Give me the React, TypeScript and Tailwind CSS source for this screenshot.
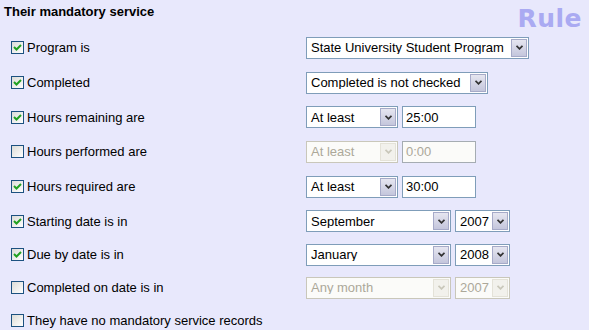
import clsx from "clsx";

type Ctl =
  | { kind: "select"; value: string; w: string; disabled?: boolean }
  | { kind: "input"; value: string; w: string; disabled?: boolean };

const rows: { label: string; checked: boolean; h: string; controls: Ctl[] }[] = [
  {
    label: "Program is",
    checked: true,
    h: "h-[35px]",
    controls: [{ kind: "select", value: "State University Student Program", w: "w-[223px]" }],
  },
  {
    label: "Completed",
    checked: true,
    h: "h-[35px]",
    controls: [{ kind: "select", value: "Completed is not checked", w: "w-[182px]" }],
  },
  {
    label: "Hours remaining are",
    checked: true,
    h: "h-[34px]",
    controls: [
      { kind: "select", value: "At least", w: "w-[92px]" },
      { kind: "input", value: "25:00", w: "w-[74px]" },
    ],
  },
  {
    label: "Hours performed are",
    checked: false,
    h: "h-[35px]",
    controls: [
      { kind: "select", value: "At least", w: "w-[92px]", disabled: true },
      { kind: "input", value: "0:00", w: "w-[74px]", disabled: true },
    ],
  },
  {
    label: "Hours required are",
    checked: true,
    h: "h-[35px]",
    controls: [
      { kind: "select", value: "At least", w: "w-[92px]" },
      { kind: "input", value: "30:00", w: "w-[74px]" },
    ],
  },
  {
    label: "Starting date is in",
    checked: true,
    h: "h-[34px]",
    controls: [
      { kind: "select", value: "September", w: "w-[145px]" },
      { kind: "select", value: "2007", w: "w-[55px]" },
    ],
  },
  {
    label: "Due by date is in",
    checked: true,
    h: "h-[33px]",
    controls: [
      { kind: "select", value: "January", w: "w-[145px]" },
      { kind: "select", value: "2008", w: "w-[55px]" },
    ],
  },
  {
    label: "Completed on date is in",
    checked: false,
    h: "h-[33px]",
    controls: [
      { kind: "select", value: "Any month", w: "w-[145px]", disabled: true },
      { kind: "select", value: "2007", w: "w-[55px]", disabled: true },
    ],
  },
  { label: "They have no mandatory service records", checked: false, h: "h-[33px]", controls: [] },
];

function Checkbox({ checked }: { checked: boolean }) {
  return (
    <span className="flex h-[13px] w-[13px] shrink-0 items-center justify-center border border-[#1c5180] bg-gradient-to-br from-[#dcdcd7] to-white">
      {checked && (
        <svg width="11" height="11" viewBox="0 0 11 11">
          <path d="M2 5 L4.5 7.5 L9 3" fill="none" stroke="#21a121" strokeWidth="2" />
        </svg>
      )}
    </span>
  );
}

function Select({ value, w, disabled }: { value: string; w: string; disabled?: boolean }) {
  return (
    <div
      className={clsx(
        "flex h-[22px] items-center border",
        w,
        disabled ? "border-[#c9c7ba] bg-[#fbfbf9] text-[#aca899]" : "border-[#7f9db9] bg-white text-black"
      )}
    >
      <span className="min-w-0 flex-1 truncate pl-[4px] text-[13px] leading-none">{value}</span>
      <span
        className={clsx(
          "m-px flex h-[18px] w-[16px] shrink-0 items-center justify-center border",
          disabled ? "border-[#e4e2d8] bg-[#f2f1ec]" : "border-[#a6aac8] bg-gradient-to-b from-[#e6e6f0] to-[#c4c6dc]"
        )}
      >
        <svg width="7" height="5" viewBox="0 0 7 5">
          <path d="M0.5 0.8 L3.5 3.8 L6.5 0.8" fill="none" stroke={disabled ? "#c9c7ba" : "#333"} strokeWidth="1.8" />
        </svg>
      </span>
    </div>
  );
}

function Input({ value, w, disabled }: { value: string; w: string; disabled?: boolean }) {
  return (
    <div
      className={clsx(
        "flex h-[22px] items-center border pl-[3px] text-[13px] leading-none",
        w,
        disabled ? "border-[#a5acb2] bg-[#fbfbf9] text-[#aca899]" : "border-[#7f9db9] bg-white text-black"
      )}
    >
      {value}
    </div>
  );
}

export default function App() {
  return (
    <div
      className="h-[330px] w-[589px] overflow-hidden bg-[#e8e8fc] text-black"
      style={{ fontFamily: '"Liberation Sans", Arial, sans-serif' }}
    >
      <div className="flex h-[30px] items-start justify-between">
        <div className="pl-[4px] pt-[4px] text-[13px] font-bold leading-[16px]">Their mandatory service</div>
        <div
          className="mr-[7px] mt-[6px] text-[25px] font-bold leading-none tracking-[0.5px] text-[#aaaaf2]"
          style={{ fontFamily: '"DejaVu Sans", Verdana, sans-serif' }}
        >
          Rule
        </div>
      </div>
      {rows.map((r) => (
        <div key={r.label} className={clsx("flex items-center", r.h)}>
          <div className="flex w-[306px] shrink-0 items-center gap-[3px] pl-[11px] text-[13px] leading-none">
            <Checkbox checked={r.checked} />
            <span>{r.label}</span>
          </div>
          <div className="flex items-center gap-[4px]">
            {r.controls.map((c, i) =>
              c.kind === "select" ? (
                <Select key={i} value={c.value} w={c.w} disabled={c.disabled} />
              ) : (
                <Input key={i} value={c.value} w={c.w} disabled={c.disabled} />
              )
            )}
          </div>
        </div>
      ))}
    </div>
  );
}
